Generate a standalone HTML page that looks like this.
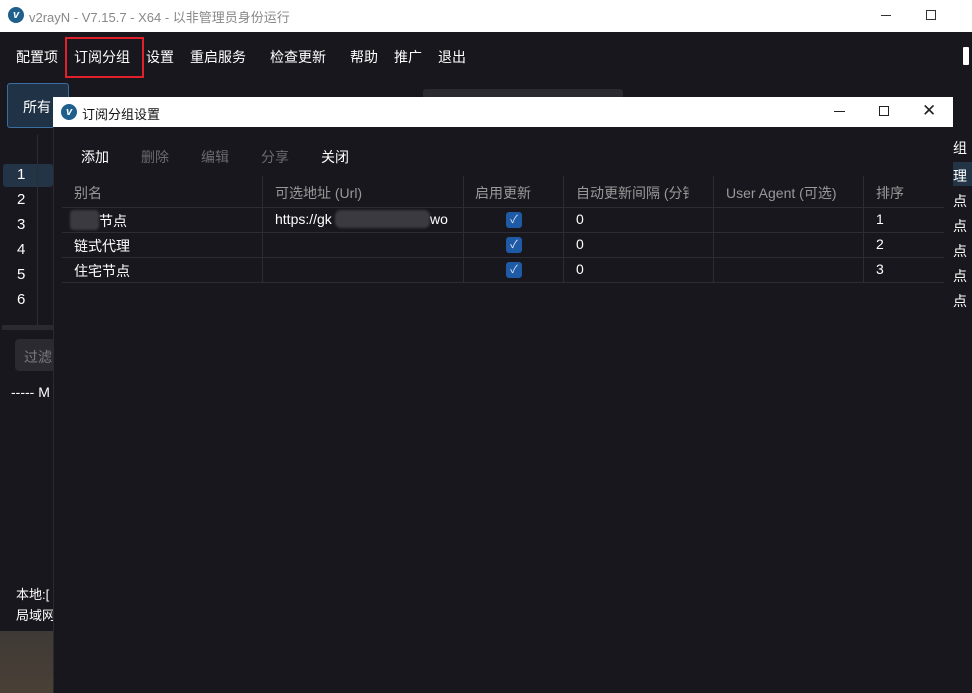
<!DOCTYPE html>
<html><head><meta charset="utf-8"><style>
*{margin:0;padding:0;box-sizing:border-box}
body{width:972px;height:693px;overflow:hidden;background:#18171d;font-family:"Liberation Sans","Noto Sans CJK SC",sans-serif;color:#fff;position:relative;font-size:14px}
.a{position:absolute;white-space:nowrap}
.logo{width:16px;height:16px;border-radius:50%;background:#1e5f8c;color:#fff;font-size:11px;font-weight:bold;font-style:italic;text-align:center;line-height:16px}
.g{color:#7a7a80}
.hl{border-top:1px solid #2c2c33}
.vl{border-left:1px solid #2c2c33}
.cb{width:16px;height:16px;border-radius:3px;background:#1f5aa6;font-size:11px;text-align:center;line-height:16px;color:#e0e8f5}
</style></head><body>
<!-- main title bar -->
<div class="a" style="left:0;top:0;width:972px;height:32px;background:#fff"></div>
<div class="a logo" style="left:8px;top:7px">v</div>
<div class="a" style="left:29px;top:7px;color:#888;font-size:13px">v2rayN - V7.15.7 - X64 - 以非管理员身份运行</div>
<div class="a" style="left:881px;top:15px;width:10px;height:1px;background:#333"></div>
<div class="a" style="left:926px;top:10px;width:10px;height:10px;border:1px solid #333"></div>
<!-- menu -->
<div class="a" style="left:16px;top:47px">配置项</div>
<div class="a" style="left:65px;top:37px;width:79px;height:41px;border:2px solid #e0202a"></div>
<div class="a" style="left:74px;top:47px">订阅分组</div>
<div class="a" style="left:146px;top:47px">设置</div>
<div class="a" style="left:190px;top:47px">重启服务</div>
<div class="a" style="left:270px;top:47px">检查更新</div>
<div class="a" style="left:350px;top:47px">帮助</div>
<div class="a" style="left:394px;top:47px">推广</div>
<div class="a" style="left:438px;top:47px">退出</div>
<div class="a" style="left:7px;top:83px;width:62px;height:45px;background:#203246;border:1px solid #3b6ea0;border-radius:3px"></div>
<div class="a" style="left:23px;top:97px">所有</div>
<div class="a" style="left:423px;top:89px;width:200px;height:10px;background:#2a2a30;border-radius:3px"></div>
<!-- left list behind -->
<div class="a" style="left:3px;top:164px;width:50px;height:23px;background:#233447;border-radius:3px"></div>
<div class="a" style="left:0;top:162px;width:53px" class="hl"></div>
<div class="a" style="left:17px;top:166px;font-size:15px">1</div>
<div class="a" style="left:17px;top:191px;font-size:15px">2</div>
<div class="a" style="left:17px;top:216px;font-size:15px">3</div>
<div class="a" style="left:17px;top:241px;font-size:15px">4</div>
<div class="a" style="left:17px;top:266px;font-size:15px">5</div>
<div class="a" style="left:17px;top:291px;font-size:15px">6</div>
<div class="a" style="left:37px;top:135px;width:1px;height:190px;background:#2c2c33"></div>
<div class="a" style="left:2px;top:325px;width:51px;height:5px;background:#2a2a30"></div>
<div class="a" style="left:15px;top:339px;width:40px;height:32px;background:#2a2a30;border-radius:4px"></div>
<div class="a g" style="left:24px;top:347px">过滤</div>
<div class="a" style="left:11px;top:384px">----- M</div>
<div class="a" style="left:16px;top:584px;font-size:13px">本地:[</div>
<div class="a" style="left:16px;top:605px;font-size:13px">局域网</div>
<div class="a" style="left:0;top:631px;width:53px;height:62px;background:linear-gradient(#3e3a35,#4a4036)"></div>
<!-- right column behind -->
<div class="a" style="left:953px;top:138px;font-size:14px">组</div>
<div class="a" style="left:953px;top:162px;width:19px;height:24px;background:#233447"></div>
<div class="a" style="left:953px;top:166px">理</div>
<div class="a" style="left:953px;top:191px">点</div>
<div class="a" style="left:953px;top:216px">点</div>
<div class="a" style="left:953px;top:241px">点</div>
<div class="a" style="left:953px;top:266px">点</div>
<div class="a" style="left:953px;top:291px">点</div>
<div class="a" style="left:963px;top:47px;width:6px;height:18px;background:#fff;border-radius:1px"></div>
<!-- dialog -->
<div class="a" style="left:53px;top:97px;width:900px;height:596px;background:#18171d;border-left:1px solid #2a2a30"></div>
<div class="a" style="left:53px;top:97px;width:900px;height:30px;background:#fff"></div>
<div class="a logo" style="left:61px;top:104px">v</div>
<div class="a" style="left:82px;top:104px;color:#111;font-size:13px">订阅分组设置</div>
<div class="a" style="left:834px;top:111px;width:11px;height:1px;background:#222"></div>
<div class="a" style="left:879px;top:106px;width:10px;height:10px;border:1px solid #222"></div>
<div class="a" style="left:922px;top:101px;color:#222;font-size:17px">✕</div>
<div class="a" style="left:81px;top:147px">添加</div>
<div class="a g" style="left:141px;top:147px;color:#6a6a70">删除</div>
<div class="a g" style="left:201px;top:147px;color:#6a6a70">编辑</div>
<div class="a g" style="left:261px;top:147px;color:#6a6a70">分享</div>
<div class="a" style="left:321px;top:147px">关闭</div>
<!-- table -->
<div class="a" style="left:62px;top:207px;width:882px;height:1px;background:#2c2c33"></div>
<div class="a" style="left:62px;top:232px;width:882px;height:1px;background:#2c2c33"></div>
<div class="a" style="left:62px;top:257px;width:882px;height:1px;background:#2c2c33"></div>
<div class="a" style="left:62px;top:282px;width:882px;height:1px;background:#2c2c33"></div>
<div class="a" style="left:262px;top:176px;width:1px;height:106px;background:#2c2c33"></div>
<div class="a" style="left:463px;top:176px;width:1px;height:106px;background:#2c2c33"></div>
<div class="a" style="left:563px;top:176px;width:1px;height:106px;background:#2c2c33"></div>
<div class="a" style="left:713px;top:176px;width:1px;height:106px;background:#2c2c33"></div>
<div class="a" style="left:863px;top:176px;width:1px;height:106px;background:#2c2c33"></div>
<div class="a g" style="left:74px;top:183px;color:#999">别名</div>
<div class="a" style="left:275px;top:183px;color:#999">可选地址 (Url)</div>
<div class="a" style="left:475px;top:183px;color:#999">启用更新</div>
<div class="a" style="left:576px;top:183px;color:#999;width:113px;overflow:hidden">自动更新间隔 (分钟)</div>
<div class="a" style="left:726px;top:183px;color:#999;width:113px;overflow:hidden">User Agent (可选)</div>
<div class="a" style="left:876px;top:183px;color:#999">排序</div>
<div class="a" style="left:70px;top:210px;width:29px;height:20px;background:#3a3a40;border-radius:4px;filter:blur(1px)"></div>
<div class="a" style="left:99px;top:211px">节点</div>
<div class="a" style="left:275px;top:211px">https://gk</div>
<div class="a" style="left:335px;top:210px;width:95px;height:18px;background:#3a3a40;border-radius:6px;filter:blur(1px)"></div>
<div class="a" style="left:430px;top:211px;width:21px;overflow:hidden">wo</div>
<div class="a" style="left:74px;top:236px">链式代理</div>
<div class="a" style="left:74px;top:261px">住宅节点</div>
<div class="a cb" style="left:506px;top:212px">✓</div>
<div class="a cb" style="left:506px;top:237px">✓</div>
<div class="a cb" style="left:506px;top:262px">✓</div>
<div class="a" style="left:576px;top:211px">0</div>
<div class="a" style="left:576px;top:236px">0</div>
<div class="a" style="left:576px;top:261px">0</div>
<div class="a" style="left:876px;top:211px">1</div>
<div class="a" style="left:876px;top:236px">2</div>
<div class="a" style="left:876px;top:261px">3</div>
</body></html>
